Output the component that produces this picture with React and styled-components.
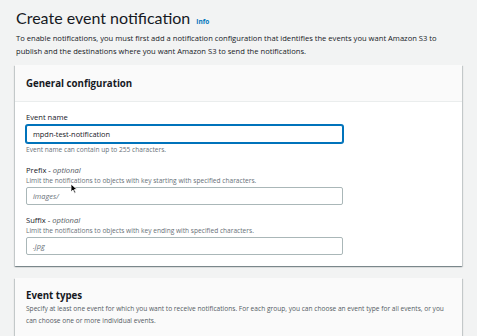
import styled, { createGlobalStyle } from "styled-components";

const GlobalStyle = createGlobalStyle`
    html, body {
        margin: 0;
        padding: 0;
        background: #f2f3f3;
        font-family: "Open Sans", "Noto Sans", sans-serif;
        color: #16191f;
    }
    * { box-sizing: border-box; }
`;

const Page = styled.div`
    width: 477px;
    height: 336px;
    overflow: hidden;
    padding: 6px 15px 0 15px;
    position: relative;
`;

const TitleRow = styled.div`
    display: flex;
    align-items: baseline;
    gap: 6px;
    padding-left: 1px;
`;

const Title = styled.h1`
    margin: 0;
    font-family: Lato, "Open Sans", sans-serif;
    font-size: 16px;
    font-weight: 400;
    line-height: 24px;
    color: #16191f;
`;

const InfoLink = styled.a`
    font-size: 6.5px;
    font-weight: 700;
    color: #0073bb;
`;

const Intro = styled.p`
    margin: 2px 0 0 1px;
    font-size: 7.6px;
    line-height: 13px;
    color: #16191f;
    width: 440px;
`;

const Card = styled.section`
    background: #fff;
    margin-top: ${({ $top }) => $top}px;
    box-shadow: 0 1px 1px 0 rgba(0, 28, 36, 0.3), 1px 1px 1px 0 rgba(0, 28, 36, 0.15), -1px 1px 1px 0 rgba(0, 28, 36, 0.15);
    width: 447px;
`;

const CardHeader = styled.header`
    background: #fafafa;
    border-bottom: 1px solid #eaeded;
    padding: ${({ $pad }) => $pad};
`;

const CardTitle = styled.h2`
    margin: 0;
    font-size: 9.7px;
    font-weight: 700;
    line-height: 15px;
`;

const CardDesc = styled.p`
    margin: 0;
    max-width: 428px;
    font-size: 6.6px;
    line-height: 12px;
    color: #545b64;
`;

const CardBody = styled.div`
    padding: 9px 10px 11px 11px;
    display: flex;
    flex-direction: column;
    gap: 9px;
`;

const Field = styled.div`
    display: flex;
    flex-direction: column;
`;

const Label = styled.label`
    font-size: 7.6px;
    line-height: 12px;
    color: #16191f;
    margin-bottom: ${({ $gap }) => $gap || 0}px;
    em {
        font-style: italic;
        color: #545b64;
    }
`;

const Hint = styled.div`
    font-size: 6.6px;
    line-height: 10px;
    color: #687078;
    margin-bottom: ${({ $below }) => ($below ? "0" : "1px")};
    margin-top: ${({ $below }) => ($below ? "2px" : "0")};
`;

const Input = styled.div`
    width: 317px;
    height: 18px;
    border: 1px solid ${({ $focus }) => ($focus ? "#0073bb" : "#aab7b8")};
    box-shadow: ${({ $focus }) => ($focus ? "0 0 0 1px #0073bb" : "none")};
    border-radius: 2px;
    padding: 0 6px;
    display: flex;
    align-items: center;
    font-size: 7.4px;
    color: ${({ $placeholder }) => ($placeholder ? "#687078" : "#16191f")};
    font-style: ${({ $placeholder }) => ($placeholder ? "italic" : "normal")};
    background: #fff;
`;

const Cursor = styled.svg`
    position: absolute;
    left: 70px;
    top: 183px;
`;

export default function App() {
    return (
        <Page>
            <GlobalStyle />
            <TitleRow>
                <Title>Create event notification</Title>
                <InfoLink>Info</InfoLink>
            </TitleRow>
            <Intro>
                To enable notifications, you must first add a notification configuration that identifies the events you want Amazon S3 to
                publish and the destinations where you want Amazon S3 to send the notifications.
            </Intro>
            <Card $top={7}>
                <CardHeader $pad="11px 11px 10px 11px">
                    <CardTitle>General configuration</CardTitle>
                </CardHeader>
                <CardBody>
                    <Field>
                        <Label $gap={2}>Event name</Label>
                        <Input $focus>mpdn-test-notification</Input>
                        <Hint $below>Event name can contain up to 255 characters.</Hint>
                    </Field>
                    <Field>
                        <Label>Prefix - <em>optional</em></Label>
                        <Hint>Limit the notifications to objects with key starting with specified characters.</Hint>
                        <Input $placeholder>images/</Input>
                    </Field>
                    <Field>
                        <Label>Suffix - <em>optional</em></Label>
                        <Hint>Limit the notifications to objects with key ending with specified characters.</Hint>
                        <Input $placeholder>.jpg</Input>
                    </Field>
                </CardBody>
            </Card>
            <Card $top={12}>
                <CardHeader $pad="10px 4px 10px 11px">
                    <CardTitle>Event types</CardTitle>
                    <CardDesc>
                        Specify at least one event for which you want to receive notifications. For each group, you can choose an event type for all events, or you
                        can choose one or more individual events.
                    </CardDesc>
                </CardHeader>
            </Card>
            <Cursor width="8" height="11" viewBox="0 0 8 11">
                <path d="M1 1 L1 9 L3 7 L4.6 10.2 L5.8 9.6 L4.3 6.6 L7 6.4 Z" fill="#000" stroke="#fff" strokeWidth="0.8" />
            </Cursor>
        </Page>
    );
}
